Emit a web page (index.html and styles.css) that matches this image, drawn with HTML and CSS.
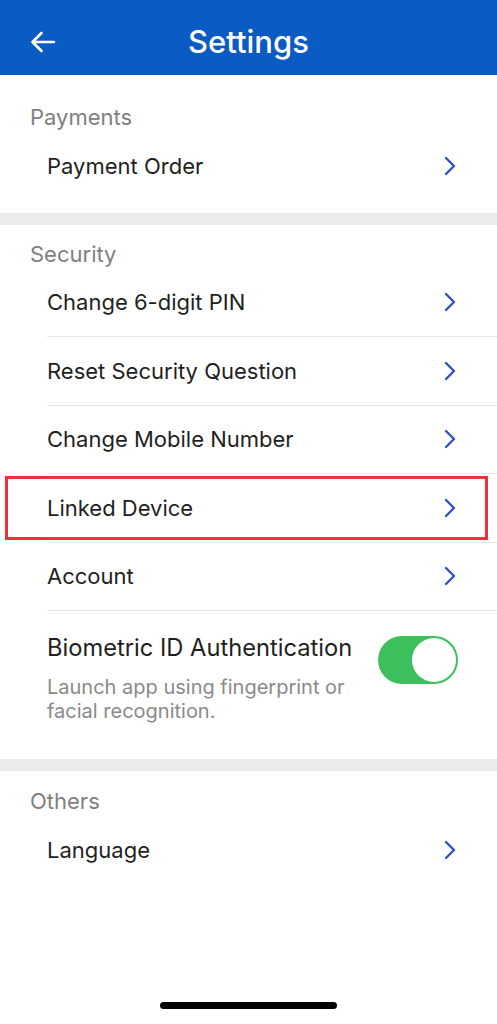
FILE: index.html
```html
<!DOCTYPE html>
<html lang="en">

<head>
    <meta charset="UTF-8">
    <meta name="viewport" content="width=device-width, initial-scale=1.0">
    <title>Settings</title>
    <link rel="stylesheet" href="styles.css">
</head>

<body>
    <header class="topbar">
        <button class="back" aria-label="Back">
            <svg width="26" height="22" viewBox="0 0 26 22">
                <path d="M24 11H2.5M11.5 2L2.5 11L11.5 20" fill="none" stroke="#fff" stroke-width="2.6" stroke-linecap="round" stroke-linejoin="round" />
            </svg>
        </button>
        <h1 class="title">Settings</h1>
    </header>

    <section class="group group-first">
        <h2 class="group-title">Payments</h2>
        <div class="row">
            <span class="row-label">Payment Order</span>
            <svg class="chevron" width="14" height="20" viewBox="0 0 14 20"><path d="M3 2L11 10L3 18" /></svg>
        </div>
    </section>

    <section class="group">
        <h2 class="group-title">Security</h2>
        <div class="row">
            <span class="row-label">Change 6-digit PIN</span>
            <svg class="chevron" width="14" height="20" viewBox="0 0 14 20"><path d="M3 2L11 10L3 18" /></svg>
        </div>
        <div class="row">
            <span class="row-label">Reset Security Question</span>
            <svg class="chevron" width="14" height="20" viewBox="0 0 14 20"><path d="M3 2L11 10L3 18" /></svg>
        </div>
        <div class="row">
            <span class="row-label">Change Mobile Number</span>
            <svg class="chevron" width="14" height="20" viewBox="0 0 14 20"><path d="M3 2L11 10L3 18" /></svg>
        </div>
        <div class="row row-marked">
            <span class="row-label">Linked Device</span>
            <svg class="chevron" width="14" height="20" viewBox="0 0 14 20"><path d="M3 2L11 10L3 18" /></svg>
            <span class="highlight"></span>
        </div>
        <div class="row">
            <span class="row-label">Account</span>
            <svg class="chevron" width="14" height="20" viewBox="0 0 14 20"><path d="M3 2L11 10L3 18" /></svg>
        </div>
        <div class="row row-switch">
            <div class="switch-text">
                <div class="row-label">Biometric ID Authentication</div>
                <div class="row-desc">Launch app using fingerprint or facial recognition.</div>
            </div>
            <span class="toggle"><span class="knob"></span></span>
        </div>
    </section>

    <section class="group group-last">
        <h2 class="group-title">Others</h2>
        <div class="row">
            <span class="row-label">Language</span>
            <svg class="chevron" width="14" height="20" viewBox="0 0 14 20"><path d="M3 2L11 10L3 18" /></svg>
        </div>
    </section>

    <div class="home-bar"></div>
</body>

</html>
```

FILE: styles.css
```css
body {
    margin: 0;
    min-height: 100vh;
    display: flex;
    flex-direction: column;
    font-family: Inter, "Noto Sans", "Liberation Sans", sans-serif;
    background-color: #fff;
    color: #222;
}

.topbar {
    position: relative;
    height: 75px;
    box-sizing: border-box;
    padding-top: 8px;
    display: flex;
    align-items: center;
    justify-content: center;
    background-color: #0a5bc3;
}

.back {
    position: absolute;
    left: 30px;
    top: 31px;
    padding: 0;
    border: none;
    background: none;
    display: flex;
}

.title {
    margin: 0;
    font-size: 31px;
    font-weight: 500;
    color: #fff;
}

.group {
    padding-top: 14px;
    border-top: 12px solid #ebebeb;
}

.group-first {
    padding-top: 27px;
    padding-bottom: 12px;
    border-top: none;
}

.group-last {
    padding-top: 15px;
}

.group-title {
    margin: 0;
    padding-left: 30px;
    font-size: 22px;
    line-height: 30px;
    font-weight: 400;
    color: #808080;
}

.row {
    position: relative;
    height: 68.5px;
    box-sizing: border-box;
    margin-left: 47px;
    padding-right: 40px;
    display: flex;
    align-items: center;
    justify-content: space-between;
    border-bottom: 1px solid #e6e6e6;
}

.row:last-child {
    border-bottom: none;
}

.row-label {
    font-size: 22px;
    font-weight: 400;
    color: #1f1f1f;
}

.chevron path {
    fill: none;
    stroke: #3350c6;
    stroke-width: 2.4;
    stroke-linecap: round;
    stroke-linejoin: round;
}

.highlight {
    position: absolute;
    left: -42px;
    right: 9px;
    top: 2px;
    bottom: 2px;
    border: 3px solid #ec3139;
}

.row-switch {
    height: auto;
    padding-top: 22px;
    padding-bottom: 36px;
    padding-right: 39px;
    align-items: flex-start;
}

.switch-text .row-label {
    font-size: 23.7px;
    line-height: 30px;
}

.row-desc {
    margin-top: 12px;
    font-size: 20px;
    line-height: 24px;
    color: #8a8a8a;
    max-width: 310px;
}

.toggle {
    margin-top: 3px;
    width: 80px;
    height: 48px;
    box-sizing: border-box;
    padding: 2px;
    border-radius: 24px;
    background-color: #3cbf5c;
    display: flex;
    justify-content: flex-end;
}

.knob {
    width: 44px;
    height: 44px;
    border-radius: 50%;
    background-color: #fff;
}

.home-bar {
    margin: auto auto 15px;
    width: 177px;
    height: 7px;
    border-radius: 4px;
    background-color: #000;
}
```
